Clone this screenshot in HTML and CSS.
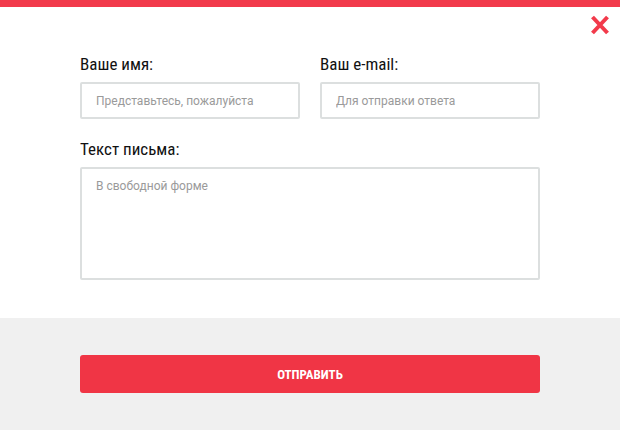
FILE: index.html
```html
<!DOCTYPE html>
<html lang="ru">
<head>
<meta charset="utf-8">
<title>Форма</title>
<link rel="stylesheet" href="styles.css">
</head>
<body>
<div class="topbar"></div>
<div class="modal">
  <button class="close" type="button" aria-label="Закрыть">
    <svg width="20" height="22" viewBox="0 0 20 22"><path d="M2.5 3 L17.5 19 M17.5 3 L2.5 19" stroke="#f23a4b" stroke-width="4" fill="none"/></svg>
  </button>
  <form class="form">
    <div class="row">
      <label class="field">
        <span class="label">Ваше имя:</span>
        <input class="input" type="text" placeholder="Представьтесь, пожалуйста">
      </label>
      <label class="field">
        <span class="label">Ваш e-mail:</span>
        <input class="input" type="text" placeholder="Для отправки ответа">
      </label>
    </div>
    <label class="field">
      <span class="label">Текст письма:</span>
      <textarea class="textarea" placeholder="В свободной форме"></textarea>
    </label>
  </form>
</div>
<div class="footer">
  <button class="submit" type="button">ОТПРАВИТЬ</button>
</div>
</body>
</html>
```
FILE: styles.css
```css
html, body {
  margin: 0;
  padding: 0;
  background: #fff;
}
body {
  width: 620px;
  height: 430px;
  overflow: hidden;
  font-family: "Liberation Sans Narrow", "Roboto Condensed", Roboto, sans-serif;
}
.topbar {
  height: 7px;
  background: #f23a4b;
}
.modal {
  position: relative;
  height: 311px;
  box-sizing: border-box;
  padding: 47px 80px 0 80px;
}
.close {
  position: absolute;
  top: 7px;
  right: 10px;
  padding: 0;
  border: 0;
  background: none;
  width: 20px;
  height: 22px;
}
.close svg { display: block; }
.form {
  display: flex;
  flex-direction: column;
  gap: 20px;
}
.row {
  display: grid;
  grid-template-columns: 220px 220px;
  column-gap: 20px;
}
.field {
  display: flex;
  flex-direction: column;
}
.label {
  font-size: 17px;
  line-height: 20px;
  color: #111;
  margin-bottom: 8px;
}
.input, .textarea {
  box-sizing: border-box;
  border: 2px solid #dcdfdf;
  border-radius: 2px;
  background: #fff;
  font-family: Roboto, sans-serif;
  font-size: 12px;
  color: #333;
  outline: none;
  margin: 0;
}
.input {
  height: 37px;
  padding: 0 14px;
}
.textarea {
  width: 460px;
  height: 113px;
  padding: 10px 14px;
  resize: none;
}
.input::placeholder, .textarea::placeholder {
  color: #9a9a9a;
}
.footer {
  height: 112px;
  background: #f0f0f0;
  box-sizing: border-box;
  padding: 37px 80px 0 80px;
}
.submit {
  display: block;
  width: 460px;
  height: 38px;
  border: 0;
  border-radius: 3px;
  background: #f03545;
  color: #fff;
  font-family: "Liberation Sans Narrow", "Roboto Condensed", Roboto, sans-serif;
  font-size: 13px;
  font-weight: bold;
  padding: 0;
}
```
